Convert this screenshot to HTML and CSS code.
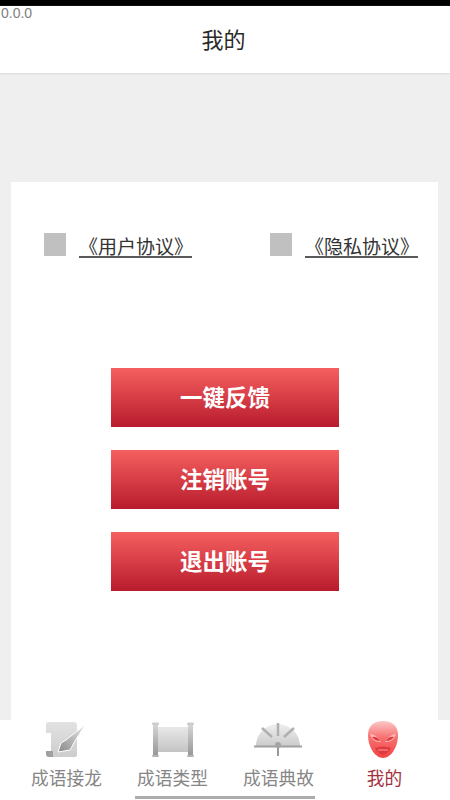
FILE: index.html
```html
<!DOCTYPE html>
<html lang="zh-CN">
<head>
<meta charset="utf-8">
<title>我的</title>
<link rel="stylesheet" href="styles.css">
</head>
<body>
<div class="page">
  <div class="status"></div>
  <header class="header">我的</header>
  <div class="version">0.0.0</div>
  <main class="main">
    <section class="card">
      <div class="agreements">
        <div class="agreement"><span class="check"></span><a class="link">《用户协议》</a></div>
        <div class="agreement"><span class="check"></span><a class="link">《隐私协议》</a></div>
      </div>
      <div class="actions">
        <button class="btn">一键反馈</button>
        <button class="btn">注销账号</button>
        <button class="btn">退出账号</button>
      </div>
    </section>
  </main>
  <nav class="tabs">
    <div class="tab">
      <svg class="icon" width="44" height="40" viewBox="0 0 44 40">
        <defs>
          <linearGradient id="g1" x1="0" y1="0" x2="0" y2="1"><stop offset="0" stop-color="#e2e2e2"/><stop offset="1" stop-color="#cdcdcd"/></linearGradient>
          <linearGradient id="g1b" x1="1" y1="0" x2="0" y2="1"><stop offset="0" stop-color="#ececec"/><stop offset="0.55" stop-color="#b4b4b4"/><stop offset="1" stop-color="#8a8a8a"/></linearGradient>
        </defs>
        <path d="M4 1H30Q33 1 33 4V34Q33 36 30 36H8L7 29V12H2V4Q2 1 4 1Z" fill="url(#g1)"/>
        <path d="M2 30H9V36H5Q2 36 2 33Z" fill="#a0a0a0"/>
        <path d="M42 3L22 19L17 22L14 31L26 29L31 20Z" fill="url(#g1b)" stroke="#fff" stroke-width="1"/>
      </svg>
      <span class="label">成语接龙</span>
    </div>
    <div class="tab">
      <svg class="icon" width="44" height="40" viewBox="0 0 44 40">
        <defs>
          <linearGradient id="g2" x1="0" y1="0" x2="0" y2="1"><stop offset="0" stop-color="#e8e8e8"/><stop offset="1" stop-color="#c4c4c4"/></linearGradient>
          <linearGradient id="g2b" x1="0" y1="0" x2="0" y2="1"><stop offset="0" stop-color="#d4d4d4"/><stop offset="1" stop-color="#989898"/></linearGradient>
        </defs>
        <rect x="8" y="6" width="30" height="25" fill="url(#g2)"/>
        <rect x="3" y="4" width="5" height="30" fill="url(#g2b)"/>
        <rect x="38" y="4" width="5" height="30" fill="url(#g2b)"/>
        <rect x="2" y="1.500" width="7" height="2.500" rx="1" fill="#cdcdcd"/>
        <rect x="37" y="1.500" width="7" height="2.500" rx="1" fill="#cdcdcd"/>
        <rect x="2" y="34" width="7" height="2" rx="1" fill="#b4b4b4"/>
        <rect x="37" y="34" width="7" height="2" rx="1" fill="#b4b4b4"/>
      </svg>
      <span class="label">成语类型</span>
    </div>
    <div class="tab">
      <svg class="icon" width="50" height="40" viewBox="0 0 50 40">
        <defs>
          <linearGradient id="g3" x1="0" y1="0" x2="0" y2="1"><stop offset="0" stop-color="#eeeeee"/><stop offset="1" stop-color="#cccccc"/></linearGradient>
        </defs>
        <path d="M3 25A22 22 0 0 1 47 25Z" fill="url(#g3)"/>
        <path d="M25 2V15M9 7L19 16M41 7L31 16" stroke="#b0b0b0" stroke-width="2.500" fill="none"/>
        <path d="M1 25.500H49" stroke="#a0a0a0" stroke-width="2"/>
        <path d="M25 23V35" stroke="#989898" stroke-width="2"/>
        <circle cx="25" cy="24" r="3" fill="#a4a4a4"/>
      </svg>
      <span class="label">成语典故</span>
    </div>
    <div class="tab tab-active">
      <svg class="icon" width="44" height="40" viewBox="0 0 44 40">
        <defs>
          <linearGradient id="g4" x1="0" y1="0" x2="0" y2="1"><stop offset="0" stop-color="#fcc8c8"/><stop offset="0.45" stop-color="#f87070"/><stop offset="1" stop-color="#f04444"/></linearGradient>
        </defs>
        <path d="M21 0C29 0 36 4 36 14C36 26 29 37 21 37C13 37 6 26 6 14C6 4 13 0 21 0Z" fill="url(#g4)"/>
        <path d="M8 13Q14 13 19 21Q11 22 8 13ZM34 13Q28 13 23 21Q31 22 34 13Z" fill="#ffb8b8"/>
        <path d="M10 16Q15 15 18 20Q13 20 10 16ZM32 16Q27 15 24 20Q29 20 32 16Z" fill="#e03a40"/>
        <path d="M13 27Q21 24 29 27Q26 33 21 34Q16 33 13 27Z" fill="#e03a40"/>
        <path d="M16 29H26" stroke="#ff9a9a" stroke-width="1"/>
      </svg>
      <span class="label">我的</span>
    </div>
    <div class="indicator"></div>
  </nav>
</div>
</body>
</html>
```
FILE: styles.css
```css
* { box-sizing: border-box; }
html, body { margin: 0; padding: 0; }
body { font-family: "Noto Sans CJK SC", "Noto Sans", sans-serif; background: #efefef; }
.page { position: relative; width: 450px; height: 800px; overflow: hidden; display: flex; flex-direction: column; background: #efefef; }
.status { height: 6px; background: #000; flex: none; }
.version { position: absolute; left: 1px; top: 6px; z-index: 1; font: 14px/14px "Liberation Sans", sans-serif; color: #808080; }
.header { height: 67px; flex: none; background: #fff; box-shadow: 0 1px 2px #d8d8d8; display: flex; align-items: center; justify-content: center; font-size: 22px; color: #2a2a2a; position: relative; padding: 0 3px 3px 0; }
.main { flex: 1; min-height: 0; padding: 109px 12px 0 11px; display: flex; }
.card { flex: 1; background: #fff; padding: 51px 20px 0 33px; }
.agreements { display: flex; justify-content: space-between; }
.agreement { display: flex; gap: 13px; width: 148px; }
.check { width: 22px; height: 23px; background: #c0c0c0; flex: none; }
.link { display: block; height: 25px; width: 113px; font-size: 19px; line-height: 25px; color: #333; border-bottom: 2px solid #5a5a5a; white-space: nowrap; text-align: center; }
.actions { margin: 110px 0 0 67px; width: 228px; display: flex; flex-direction: column; gap: 23px; }
.btn { height: 59px; border: 0; padding: 0 0 4px; font: bold 22.500px "Noto Sans CJK SC", sans-serif; color: #fff; background: linear-gradient(#f5605f, #b81b2d); }
.tabs { position: relative; flex: none; height: 80px; background: #fff; padding: 0 14px 0 13px; display: grid; grid-template-columns: repeat(4, 106px); }
.tab { display: flex; flex-direction: column; align-items: center; }
.icon { display: block; margin-top: 1px; flex: none; filter: blur(.7px); }
.label { font-size: 17.700px; line-height: 26px; margin-top: 3px; margin-left: 1px; color: #868686; }
.tab-active .label { color: #a5303d; }
.indicator { position: absolute; left: 135px; bottom: 1px; width: 180px; height: 3px; background: #acacac; }
```
